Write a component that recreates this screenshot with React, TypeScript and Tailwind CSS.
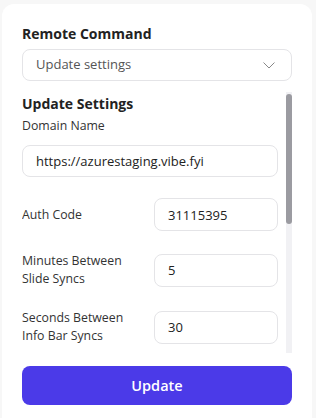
import React from "react";

const font = { fontFamily: '"Open Sans", "Noto Sans", sans-serif' };

function Row({ label, value }: { label: React.ReactNode; value: string }) {
  return (
    <div className="flex items-center">
      <div className="w-[132px] text-[12.3px] leading-[18px] text-[#333]">{label}</div>
      <input
        readOnly
        value={value}
        className="w-[124px] h-[33px] rounded-lg border border-[#e4e4e7] bg-white px-[13px] text-[13px] text-[#222] outline-none"
        style={font}
      />
    </div>
  );
}

export default function App() {
  return (
    <div className="w-[316px] h-[418px] bg-[#f7f7f7] overflow-hidden" style={font}>
      <div className="ml-[2px] mt-[4px] w-[310px] h-[440px] rounded-[12px] bg-white px-5 pt-5">
        <div className="text-[14px] font-bold leading-5 text-[#222] mb-[5px]">Remote Command</div>
        <div className="flex h-8 items-center justify-between rounded-lg border border-[#e4e4e7] pl-[13px] pr-[16px]">
          <span className="text-[13px] text-[#555]">Update settings</span>
          <svg width="12" height="7" viewBox="0 0 12 7" fill="none">
            <path d="M0.8 0.8l5.2 5.2L11.2 0.8" stroke="#888" strokeWidth="1" strokeLinecap="round" strokeLinejoin="round" />
          </svg>
        </div>
        <div className="mt-[11px] flex h-[261px]">
          <div className="flex-1 overflow-hidden">
            <div className="text-[14px] font-bold leading-6 text-[#222]">Update Settings</div>
            <div className="text-[12.3px] leading-5 text-[#333]">Domain Name</div>
            <input
              readOnly
              value="https://azurestaging.vibe.fyi"
              className="mt-[9px] w-[256px] h-8 rounded-lg border border-[#e4e4e7] bg-white px-[13px] text-[13px] text-[#222] outline-none"
              style={font}
            />
            <div className="mt-[21px] flex flex-col gap-[21px]">
              <Row label="Auth Code" value="31115395" />
              <Row label={<>Minutes Between<br />Slide Syncs</>} value="5" />
              <Row label={<>Seconds Between<br />Info Bar Syncs</>} value="30" />
            </div>
          </div>
          <div className="w-[6px] bg-[#f1f1f4] pt-[2px]">
            <div className="h-[130px] w-[6px] rounded-full bg-[#9b9ba1]" />
          </div>
        </div>
        <button className="mt-[13px] h-[39px] w-full rounded-lg bg-[#4b3ae8] text-[14.5px] font-semibold text-white" style={font}>
          Update
        </button>
      </div>
    </div>
  );
}
